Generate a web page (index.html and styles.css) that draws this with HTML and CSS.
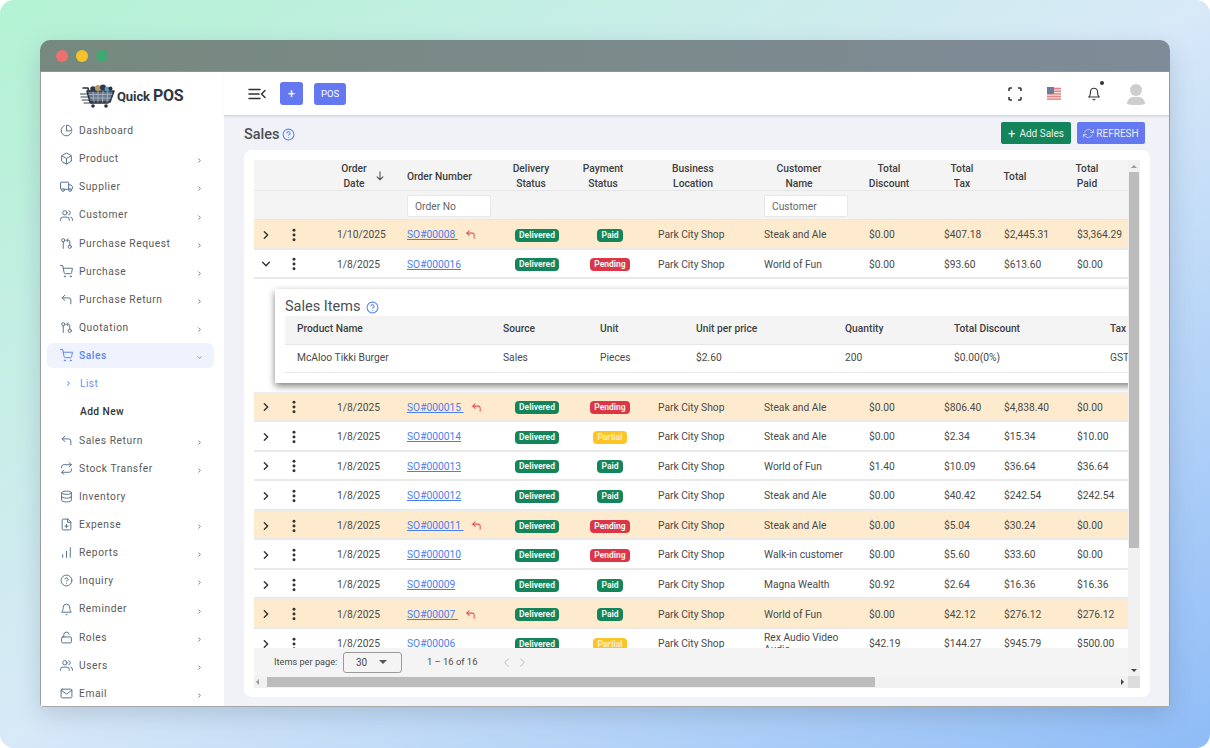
FILE: index.html
```html
<!DOCTYPE html>
<html lang="en">
<head>
    <meta charset="UTF-8">
    <title>Quick POS - Sales</title>
    <link rel="stylesheet" href="styles.css">
</head>
<body>
    <svg class="sprite" xmlns="http://www.w3.org/2000/svg">
        <symbol id="i-pie" viewBox="0 0 24 24"><path d="M21.21 15.89A10 10 0 1 1 8 2.83"/><path d="M22 12A10 10 0 0 0 12 2v10z"/></symbol>
        <symbol id="i-box" viewBox="0 0 24 24"><path d="M21 16V8a2 2 0 0 0-1-1.73l-7-4a2 2 0 0 0-2 0l-7 4A2 2 0 0 0 3 8v8a2 2 0 0 0 1 1.73l7 4a2 2 0 0 0 2 0l7-4A2 2 0 0 0 21 16z"/><polyline points="3.27 6.96 12 12.01 20.73 6.96"/><line x1="12" y1="22.08" x2="12" y2="12"/></symbol>
        <symbol id="i-truck" viewBox="0 0 24 24"><path d="M16 17V5a1 1 0 0 0-1-1H2a1 1 0 0 0-1 1v11a1 1 0 0 0 1 1h1"/><path d="M16 9h4l3 3.5V16a1 1 0 0 1-1 1h-1"/><circle cx="5.5" cy="18.5" r="2.5"/><circle cx="18.5" cy="18.5" r="2.5"/><line x1="8" y1="17" x2="16" y2="17"/></symbol>
        <symbol id="i-users" viewBox="0 0 24 24"><path d="M17 21v-2a4 4 0 0 0-4-4H5a4 4 0 0 0-4 4v2"/><circle cx="9" cy="7" r="4"/><path d="M23 21v-2a4 4 0 0 0-3-3.87"/><path d="M16 3.13a4 4 0 0 1 0 7.75"/></symbol>
        <symbol id="i-pull" viewBox="0 0 24 24"><circle cx="18" cy="18" r="3"/><circle cx="6" cy="6" r="3"/><path d="M13 6h3a2 2 0 0 1 2 2v7"/><polyline points="15 3 12 6 15 9"/><line x1="6" y1="9" x2="6" y2="21"/></symbol>
        <symbol id="i-cart" viewBox="0 0 24 24"><circle cx="9" cy="21" r="1"/><circle cx="20" cy="21" r="1"/><path d="M1 1h4l2.68 13.39a2 2 0 0 0 2 1.61h9.72a2 2 0 0 0 2-1.61L23 6H6"/></symbol>
        <symbol id="i-back" viewBox="0 0 24 24"><polyline points="9 14 4 9 9 4"/><path d="M20 20v-7a4 4 0 0 0-4-4H4"/></symbol>
        <symbol id="i-repeat" viewBox="0 0 24 24"><polyline points="17 1 21 5 17 9"/><path d="M3 11V9a4 4 0 0 1 4-4h14"/><polyline points="7 23 3 19 7 15"/><path d="M21 13v2a4 4 0 0 1-4 4H3"/></symbol>
        <symbol id="i-db" viewBox="0 0 24 24"><ellipse cx="12" cy="5" rx="9" ry="3"/><path d="M21 12c0 1.66-4 3-9 3s-9-1.34-9-3"/><path d="M3 5v14c0 1.66 4 3 9 3s9-1.34 9-3V5"/></symbol>
        <symbol id="i-file" viewBox="0 0 24 24"><path d="M14 2H6a2 2 0 0 0-2 2v16a2 2 0 0 0 2 2h12a2 2 0 0 0 2-2V8z"/><polyline points="14 2 14 8 20 8"/><line x1="12" y1="18" x2="12" y2="12"/><line x1="9" y1="15" x2="15" y2="15"/></symbol>
        <symbol id="i-bars" viewBox="0 0 24 24"><line x1="5" y1="21" x2="5" y2="16"/><line x1="12" y1="21" x2="12" y2="10"/><line x1="19" y1="21" x2="19" y2="3"/></symbol>
        <symbol id="i-help" viewBox="0 0 24 24"><circle cx="12" cy="12" r="10"/><path d="M9.09 9a3 3 0 0 1 5.83 1c0 2-3 3-3 3"/><line x1="12" y1="17" x2="12.01" y2="17"/></symbol>
        <symbol id="i-bell" viewBox="0 0 24 24"><path d="M18 8A6 6 0 0 0 6 8c0 7-3 9-3 9h18s-3-2-3-9"/><path d="M13.73 21a2 2 0 0 1-3.46 0"/></symbol>
        <symbol id="i-lock" viewBox="0 0 24 24"><rect x="3" y="11" width="18" height="11" rx="2"/><path d="M7 11V7a5 5 0 0 1 9.9-1"/></symbol>
        <symbol id="i-mail" viewBox="0 0 24 24"><path d="M4 4h16c1.1 0 2 .9 2 2v12c0 1.1-.9 2-2 2H4c-1.1 0-2-.9-2-2V6c0-1.1.9-2 2-2z"/><polyline points="22,6 12,13 2,6"/></symbol>
        <symbol id="i-right" viewBox="0 0 24 24"><polyline points="8 4 16 12 8 20"/></symbol>
        <symbol id="i-down" viewBox="0 0 24 24"><polyline points="4 8 12 16 20 8"/></symbol>
        <symbol id="i-left" viewBox="0 0 24 24"><polyline points="16 4 8 12 16 20"/></symbol>
        <symbol id="i-dots" viewBox="0 0 6 16"><circle cx="3" cy="2.5" r="1.7"/><circle cx="3" cy="8" r="1.7"/><circle cx="3" cy="13.5" r="1.7"/></symbol>
        <symbol id="i-sort" viewBox="0 0 12 12"><path d="M6 1v9.500M2.500 7 6 10.500 9.500 7"/></symbol>
    </svg>

    <div class="stage">
        <div class="window">
            <div class="titlebar">
                <span class="light light-red"></span>
                <span class="light light-yellow"></span>
                <span class="light light-green"></span>
            </div>
            <div class="app">
                <aside class="sidebar">
                    <div class="logo">
                        <svg class="logo-cart" viewBox="0 0 36 24" xmlns="http://www.w3.org/2000/svg">
                            <g stroke="#3b4450" stroke-width="1" fill="none">
                                <line x1="0" y1="10" x2="7" y2="10"/><line x1="1" y1="13" x2="9" y2="13"/><line x1="2" y1="16" x2="10" y2="16"/><line x1="4" y1="19" x2="12" y2="19"/>
                            </g>
                            <path d="M3 4h5l3 15h17" stroke="#2b323c" stroke-width="1.6" fill="none"/>
                            <path d="M7 7h27l-4 11H10z" fill="#69798c" stroke="#2b323c" stroke-width="1.6"/>
                            <g stroke="#b9c2cd" stroke-width=".7">
                                <line x1="9" y1="10.5" x2="32" y2="10.5"/><line x1="10" y1="14" x2="31" y2="14"/>
                                <line x1="13" y1="7" x2="14" y2="18"/><line x1="18" y1="7" x2="18" y2="18"/><line x1="23" y1="7" x2="22.5" y2="18"/><line x1="28" y1="7" x2="27" y2="18"/>
                            </g>
                            <circle cx="13" cy="5" r="2.8" fill="#2f3a48"/><circle cx="18" cy="4" r="3" fill="#b89a62"/><circle cx="23" cy="3.5" r="3" fill="#2f3a48"/><circle cx="27" cy="5" r="2.4" fill="#5aa0c8"/><circle cx="30.5" cy="4.500" r="2" fill="#2b323c"/>
                            <circle cx="13" cy="22" r="1.8" fill="#2b323c"/><circle cx="26" cy="22" r="1.8" fill="#2b323c"/>
                        </svg>
                        <span class="logo-quick">Quick</span>
                        <span class="logo-pos">POS</span>
                    </div>
                    <nav class="nav">
                        <a class="nav-item"><svg class="nav-icon"><use href="#i-pie"/></svg>Dashboard</a>
                        <a class="nav-item"><svg class="nav-icon"><use href="#i-box"/></svg>Product<svg class="nav-arrow"><use href="#i-right"/></svg></a>
                        <a class="nav-item"><svg class="nav-icon"><use href="#i-truck"/></svg>Supplier<svg class="nav-arrow"><use href="#i-right"/></svg></a>
                        <a class="nav-item"><svg class="nav-icon"><use href="#i-users"/></svg>Customer<svg class="nav-arrow"><use href="#i-right"/></svg></a>
                        <a class="nav-item"><svg class="nav-icon"><use href="#i-pull"/></svg>Purchase Request<svg class="nav-arrow"><use href="#i-right"/></svg></a>
                        <a class="nav-item"><svg class="nav-icon"><use href="#i-cart"/></svg>Purchase<svg class="nav-arrow"><use href="#i-right"/></svg></a>
                        <a class="nav-item"><svg class="nav-icon"><use href="#i-back"/></svg>Purchase Return<svg class="nav-arrow"><use href="#i-right"/></svg></a>
                        <a class="nav-item"><svg class="nav-icon"><use href="#i-pull"/></svg>Quotation<svg class="nav-arrow"><use href="#i-right"/></svg></a>
                        <a class="nav-item nav-active"><svg class="nav-icon"><use href="#i-cart"/></svg>Sales<svg class="nav-arrow"><use href="#i-down"/></svg></a>
                        <a class="nav-sub nav-sub-active"><svg class="sub-arrow"><use href="#i-right"/></svg>List</a>
                        <a class="nav-sub">Add New</a>
                        <a class="nav-item"><svg class="nav-icon"><use href="#i-back"/></svg>Sales Return<svg class="nav-arrow"><use href="#i-right"/></svg></a>
                        <a class="nav-item"><svg class="nav-icon"><use href="#i-repeat"/></svg>Stock Transfer<svg class="nav-arrow"><use href="#i-right"/></svg></a>
                        <a class="nav-item"><svg class="nav-icon"><use href="#i-db"/></svg>Inventory</a>
                        <a class="nav-item"><svg class="nav-icon"><use href="#i-file"/></svg>Expense<svg class="nav-arrow"><use href="#i-right"/></svg></a>
                        <a class="nav-item"><svg class="nav-icon"><use href="#i-bars"/></svg>Reports<svg class="nav-arrow"><use href="#i-right"/></svg></a>
                        <a class="nav-item"><svg class="nav-icon"><use href="#i-help"/></svg>Inquiry<svg class="nav-arrow"><use href="#i-right"/></svg></a>
                        <a class="nav-item"><svg class="nav-icon"><use href="#i-bell"/></svg>Reminder<svg class="nav-arrow"><use href="#i-right"/></svg></a>
                        <a class="nav-item"><svg class="nav-icon"><use href="#i-lock"/></svg>Roles<svg class="nav-arrow"><use href="#i-right"/></svg></a>
                        <a class="nav-item"><svg class="nav-icon"><use href="#i-users"/></svg>Users<svg class="nav-arrow"><use href="#i-right"/></svg></a>
                        <a class="nav-item"><svg class="nav-icon"><use href="#i-mail"/></svg>Email<svg class="nav-arrow"><use href="#i-right"/></svg></a>
                    </nav>
                </aside>

                <div class="content">
                    <header class="topbar">
                        <svg class="menu-icon" viewBox="0 0 18 12" xmlns="http://www.w3.org/2000/svg"><path d="M1 1.5h11M1 6h10M1 10.5h11M17 2.5 13.5 6l3.5 3.5"/></svg>
                        <button class="top-btn top-btn-plus">+</button>
                        <button class="top-btn top-btn-pos">POS</button>
                        <div class="top-right">
                            <svg class="full-icon" viewBox="0 0 14 14" xmlns="http://www.w3.org/2000/svg"><path d="M1 4V2a1 1 0 0 1 1-1h2M10 1h2a1 1 0 0 1 1 1v2M13 10v2a1 1 0 0 1-1 1h-2M4 13H2a1 1 0 0 1-1-1v-2"/></svg>
                            <svg class="flag" viewBox="0 0 14 13" xmlns="http://www.w3.org/2000/svg">
                                <rect width="14" height="13" fill="#f1d6d4"/>
                                <g fill="#d96a66"><rect y="1" width="14" height="1.4"/><rect y="3.6" width="14" height="1.4"/><rect y="6.2" width="14" height="1.4"/><rect y="8.8" width="14" height="1.4"/><rect y="11.4" width="14" height="1.4"/></g>
                                <rect width="7" height="7" fill="#4a5a80"/>
                            </svg>
                            <span class="bell-wrap"><svg class="bell"><use href="#i-bell"/></svg><span class="bell-dot"></span></span>
                            <svg class="avatar" viewBox="0 0 20 22" xmlns="http://www.w3.org/2000/svg"><circle cx="10" cy="7" r="6" fill="#cdcdcd"/><path d="M1 21c0-4 3-7 6-7h6c3 0 6 3 6 7-3 1.500-15 1.500-18 0z" fill="#cdcdcd"/></svg>
                        </div>
                    </header>

                    <main class="main">
                        <div class="page-head">
                            <h1 class="page-title">Sales</h1>
                            <svg class="help help-page"><use href="#i-help"/></svg>
                            <div class="page-actions">
                                <button class="btn btn-green"><span class="btn-plus">+</span>Add Sales</button>
                                <button class="btn btn-blue"><svg class="btn-icon" viewBox="0 0 24 24" xmlns="http://www.w3.org/2000/svg"><polyline points="23 4 23 10 17 10"/><polyline points="1 20 1 14 7 14"/><path d="M3.51 9a9 9 0 0 1 14.85-3.36L23 10M1 14l4.640 4.360A9 9 0 0 0 20.490 15"/></svg>REFRESH</button>
                            </div>
                        </div>

                        <section class="card">
                            <div class="grid-box">
                                <div class="grid-main">
                                    <div class="grid-view">
                                        <div class="cols head">
                                            <div></div><div></div>
                                            <div class="th th-date"><span class="th-date-text">Order<br>Date</span><svg class="sort"><use href="#i-sort"/></svg></div>
                                            <div class="th th-left">Order Number</div>
                                            <div class="th">Delivery<br>Status</div>
                                            <div class="th th-pay">Payment<br>Status</div>
                                            <div class="th th-loc">Business<br>Location</div>
                                            <div class="th th-cust">Customer<br>Name</div>
                                            <div class="th th-disc">Total<br>Discount</div>
                                            <div class="th th-tax">Total<br>Tax</div>
                                            <div class="th th-total">Total</div>
                                            <div class="th th-paid">Total<br>Paid</div>
                                        </div>
                                        <div class="cols filters">
                                            <div class="span-four"></div>
                                            <div class="filter-cell"><span class="filter">Order No</span></div>
                                            <div></div><div></div><div></div>
                                            <div class="filter-cell"><span class="filter">Customer</span></div>
                                        </div>

                                        <div class="cols row row-return">
                                            <svg class="chev"><use href="#i-right"/></svg><svg class="dots"><use href="#i-dots"/></svg>
                                            <div class="td-date">1/10/2025</div>
                                            <div class="td"><a class="so">SO#00008&nbsp;</a><svg class="ret"><use href="#i-back"/></svg></div>
                                            <div class="td-badge"><span class="badge b-green">Delivered</span></div>
                                            <div class="td-badge"><span class="badge b-green">Paid</span></div>
                                            <div class="td">Park City Shop</div><div class="td">Steak and Ale</div>
                                            <div class="td">$0.00</div><div class="td">$407.18</div><div class="td">$2,445.31</div><div class="td">$3,364.29</div>
                                        </div>
                                        <div class="cols row">
                                            <svg class="chev"><use href="#i-down"/></svg><svg class="dots"><use href="#i-dots"/></svg>
                                            <div class="td-date">1/8/2025</div>
                                            <div class="td"><a class="so">SO#000016</a></div>
                                            <div class="td-badge"><span class="badge b-green">Delivered</span></div>
                                            <div class="td-badge"><span class="badge b-red">Pending</span></div>
                                            <div class="td">Park City Shop</div><div class="td">World of Fun</div>
                                            <div class="td">$0.00</div><div class="td">$93.60</div><div class="td">$613.60</div><div class="td">$0.00</div>
                                        </div>

                                        <div class="detail">
                                            <div class="detail-card">
                                                <div class="detail-title">Sales Items <svg class="help"><use href="#i-help"/></svg></div>
                                                <div class="dcols dhead">
                                                    <div>Product Name</div><div>Source</div><div>Unit</div><div>Unit per price</div><div>Quantity</div><div>Total Discount</div><div>Tax</div>
                                                </div>
                                                <div class="dcols drow">
                                                    <div>McAloo Tikki Burger</div><div>Sales</div><div>Pieces</div><div>$2.60</div><div>200</div><div>$0.00(0%)</div><div>GST</div>
                                                </div>
                                            </div>
                                        </div>

                                        <div class="cols row row-return">
                                            <svg class="chev"><use href="#i-right"/></svg><svg class="dots"><use href="#i-dots"/></svg>
                                            <div class="td-date">1/8/2025</div>
                                            <div class="td"><a class="so">SO#000015&nbsp;</a><svg class="ret"><use href="#i-back"/></svg></div>
                                            <div class="td-badge"><span class="badge b-green">Delivered</span></div>
                                            <div class="td-badge"><span class="badge b-red">Pending</span></div>
                                            <div class="td">Park City Shop</div><div class="td">Steak and Ale</div>
                                            <div class="td">$0.00</div><div class="td">$806.40</div><div class="td">$4,838.40</div><div class="td">$0.00</div>
                                        </div>
                                        <div class="cols row">
                                            <svg class="chev"><use href="#i-right"/></svg><svg class="dots"><use href="#i-dots"/></svg>
                                            <div class="td-date">1/8/2025</div>
                                            <div class="td"><a class="so">SO#000014</a></div>
                                            <div class="td-badge"><span class="badge b-green">Delivered</span></div>
                                            <div class="td-badge"><span class="badge b-yellow">Partial</span></div>
                                            <div class="td">Park City Shop</div><div class="td">Steak and Ale</div>
                                            <div class="td">$0.00</div><div class="td">$2.34</div><div class="td">$15.34</div><div class="td">$10.00</div>
                                        </div>
                                        <div class="cols row">
                                            <svg class="chev"><use href="#i-right"/></svg><svg class="dots"><use href="#i-dots"/></svg>
                                            <div class="td-date">1/8/2025</div>
                                            <div class="td"><a class="so">SO#000013</a></div>
                                            <div class="td-badge"><span class="badge b-green">Delivered</span></div>
                                            <div class="td-badge"><span class="badge b-green">Paid</span></div>
                                            <div class="td">Park City Shop</div><div class="td">World of Fun</div>
                                            <div class="td">$1.40</div><div class="td">$10.09</div><div class="td">$36.64</div><div class="td">$36.64</div>
                                        </div>
                                        <div class="cols row">
                                            <svg class="chev"><use href="#i-right"/></svg><svg class="dots"><use href="#i-dots"/></svg>
                                            <div class="td-date">1/8/2025</div>
                                            <div class="td"><a class="so">SO#000012</a></div>
                                            <div class="td-badge"><span class="badge b-green">Delivered</span></div>
                                            <div class="td-badge"><span class="badge b-green">Paid</span></div>
                                            <div class="td">Park City Shop</div><div class="td">Steak and Ale</div>
                                            <div class="td">$0.00</div><div class="td">$40.42</div><div class="td">$242.54</div><div class="td">$242.54</div>
                                        </div>
                                        <div class="cols row row-return">
                                            <svg class="chev"><use href="#i-right"/></svg><svg class="dots"><use href="#i-dots"/></svg>
                                            <div class="td-date">1/8/2025</div>
                                            <div class="td"><a class="so">SO#000011&nbsp;</a><svg class="ret"><use href="#i-back"/></svg></div>
                                            <div class="td-badge"><span class="badge b-green">Delivered</span></div>
                                            <div class="td-badge"><span class="badge b-red">Pending</span></div>
                                            <div class="td">Park City Shop</div><div class="td">Steak and Ale</div>
                                            <div class="td">$0.00</div><div class="td">$5.04</div><div class="td">$30.24</div><div class="td">$0.00</div>
                                        </div>
                                        <div class="cols row">
                                            <svg class="chev"><use href="#i-right"/></svg><svg class="dots"><use href="#i-dots"/></svg>
                                            <div class="td-date">1/8/2025</div>
                                            <div class="td"><a class="so">SO#000010</a></div>
                                            <div class="td-badge"><span class="badge b-green">Delivered</span></div>
                                            <div class="td-badge"><span class="badge b-red">Pending</span></div>
                                            <div class="td">Park City Shop</div><div class="td">Walk-in customer</div>
                                            <div class="td">$0.00</div><div class="td">$5.60</div><div class="td">$33.60</div><div class="td">$0.00</div>
                                        </div>
                                        <div class="cols row">
                                            <svg class="chev"><use href="#i-right"/></svg><svg class="dots"><use href="#i-dots"/></svg>
                                            <div class="td-date">1/8/2025</div>
                                            <div class="td"><a class="so">SO#00009</a></div>
                                            <div class="td-badge"><span class="badge b-green">Delivered</span></div>
                                            <div class="td-badge"><span class="badge b-green">Paid</span></div>
                                            <div class="td">Park City Shop</div><div class="td">Magna Wealth</div>
                                            <div class="td">$0.92</div><div class="td">$2.64</div><div class="td">$16.36</div><div class="td">$16.36</div>
                                        </div>
                                        <div class="cols row row-return">
                                            <svg class="chev"><use href="#i-right"/></svg><svg class="dots"><use href="#i-dots"/></svg>
                                            <div class="td-date">1/8/2025</div>
                                            <div class="td"><a class="so">SO#00007&nbsp;</a><svg class="ret"><use href="#i-back"/></svg></div>
                                            <div class="td-badge"><span class="badge b-green">Delivered</span></div>
                                            <div class="td-badge"><span class="badge b-green">Paid</span></div>
                                            <div class="td">Park City Shop</div><div class="td">World of Fun</div>
                                            <div class="td">$0.00</div><div class="td">$42.12</div><div class="td">$276.12</div><div class="td">$276.12</div>
                                        </div>
                                        <div class="cols row">
                                            <svg class="chev"><use href="#i-right"/></svg><svg class="dots"><use href="#i-dots"/></svg>
                                            <div class="td-date">1/8/2025</div>
                                            <div class="td"><a class="so">SO#00006</a></div>
                                            <div class="td-badge"><span class="badge b-green">Delivered</span></div>
                                            <div class="td-badge"><span class="badge b-yellow">Partial</span></div>
                                            <div class="td">Park City Shop</div><div class="td td-wrap">Rex Audio Video Audio</div>
                                            <div class="td">$42.19</div><div class="td">$144.27</div><div class="td">$945.79</div><div class="td">$500.00</div>
                                        </div>
                                    </div>
                                    <div class="pager">
                                        <span class="pager-label">Items per page:</span>
                                        <span class="pager-select">30<span class="caret"></span></span>
                                        <span class="pager-range">1 – 16 of 16</span>
                                        <svg class="pager-nav"><use href="#i-left"/></svg>
                                        <svg class="pager-nav"><use href="#i-right"/></svg>
                                    </div>
                                </div>
                                <div class="vbar">
                                    <span class="tri tri-up"></span>
                                    <span class="vthumb"></span>
                                    <span class="tri tri-down"></span>
                                </div>
                                <div class="hbar">
                                    <span class="tri tri-left"></span>
                                    <span class="hthumb"></span>
                                    <span class="tri tri-right"></span>
                                </div>
                                <div class="corner"></div>
                            </div>
                        </section>
                    </main>
                </div>
            </div>
        </div>
    </div>
</body>
</html>
```

FILE: styles.css
```css
* {
    margin: 0;
    padding: 0;
    box-sizing: border-box;
}
html, body {
    background: #fff;
    overflow: hidden;
}
body {
    width: 1210px;
    height: 748px;
    font: 10.25px/1.3 Roboto, "Liberation Sans", sans-serif;
    color: #4a4a4a;
}
.sprite {
    display: none;
}
svg {
    fill: none;
    stroke: currentColor;
    stroke-width: 2;
    stroke-linecap: round;
    stroke-linejoin: round;
    flex: none;
}
button {
    border: 0;
    font-family: inherit;
}
.stage {
    height: 748px;
    padding: 40px 40px 41px;
    border-radius: 14px;
    background: linear-gradient(to bottom right, #b3f3d3 0%, #d8e9f8 50%, #8fbcf7 100%);
}
.window {
    height: 667px;
    display: flex;
    flex-direction: column;
    border-radius: 10px 10px 4px 4px;
    box-shadow: 0 8px 24px rgba(60, 80, 110, .22);
    overflow: hidden;
}

/* title bar */
.titlebar {
    height: 32px;
    flex: none;
    display: flex;
    align-items: center;
    gap: 8px;
    padding-left: 16px;
    background: linear-gradient(90deg, #76897e, #7f8b98);
    border-bottom: 1px solid #8d9499;
}
.light {
    width: 12px;
    height: 12px;
    border-radius: 50%;
}
.light-red { background: #ee6f70; }
.light-yellow { background: #f5c329; }
.light-green { background: #3fa76f; }

.app {
    flex: 1;
    min-height: 0;
    display: flex;
    border-left: 1px solid #9c9c9c;
    border-right: 1px solid #9c9c9c;
    border-bottom: 1px solid #a8a8a8;
}

/* sidebar */
.sidebar {
    width: 183px;
    flex: none;
    background: #fff;
    overflow: hidden;
}
.logo {
    height: 44px;
    display: flex;
    align-items: center;
    padding: 3px 0 0 39px;
    color: #2f3640;
    font-weight: 700;
}
.logo-cart {
    width: 36px;
    height: 24px;
    stroke: none;
    margin-right: 1px;
}
.logo-quick {
    font-size: 13px;
    margin-right: 3px;
    margin-top: 3px;
    letter-spacing: -.1px;
}
.logo-pos {
    font-size: 16px;
    margin-top: 1px;
    letter-spacing: -.2px;
}
.nav {
    display: flex;
    flex-direction: column;
    padding-top: .6px;
}
.nav-item {
    height: 25px;
    flex: none;
    margin: 1.58px 10px 1.57px 6px;
    padding: 0 13px;
    display: flex;
    align-items: center;
    border-radius: 6px;
    letter-spacing: .55px;
    color: #5a5a5a;
}
.nav-icon {
    width: 13px;
    height: 13px;
    margin-right: 6px;
    color: #56708f;
    stroke-width: 1.8;
}
.nav-arrow {
    width: 5px;
    height: 5px;
    margin-left: auto;
    margin-right: -1px;
    margin-top: 4px;
    color: #666;
    stroke-width: 4;
}
.nav-active {
    background: #eef3fd;
    color: #5b86ee;
    font-weight: 500;
}
.nav-active .nav-icon,
.nav-active .nav-arrow {
    color: #5b86ee;
}
.nav-sub {
    height: 28.15px;
    flex: none;
    padding-left: 39px;
    display: flex;
    align-items: center;
    letter-spacing: .4px;
    font-weight: 500;
    color: #333;
}
.nav-sub-active {
    color: #6a93f2;
    font-weight: 400;
}
.sub-arrow {
    width: 5px;
    height: 5px;
    margin: 0 9px 0 -14px;
    stroke-width: 5;
}

/* top bar */
.content {
    flex: 1;
    min-width: 0;
    display: flex;
    flex-direction: column;
    background: #f0f2f8;
}
.topbar {
    height: 44px;
    flex: none;
    display: flex;
    align-items: center;
    padding: 0 24px;
    background: #fff;
    border-bottom: 1px solid #d8d8d8;
    box-shadow: 0 1px 2px rgba(0, 0, 0, .08);
}
.menu-icon {
    width: 18px;
    height: 12px;
    color: #333;
    stroke-width: 1.5;
    margin-right: 14px;
}
.top-btn {
    height: 22px;
    color: #fff;
    background: #6478f0;
    border-radius: 3px;
    font-size: 9.5px;
}
.top-btn-plus {
    width: 23px;
    height: 23px;
    font-size: 13px;
    margin-right: 11px;
}
.top-btn-pos {
    width: 32px;
}
.top-right {
    margin-left: auto;
    display: flex;
    align-items: center;
    margin-right: -1px;
}
.full-icon {
    width: 14px;
    height: 14px;
    color: #333;
    stroke-width: 1.6;
    stroke-linecap: butt;
}
.flag {
    width: 14px;
    height: 13px;
    stroke: none;
    margin-left: 25px;
    opacity: .8;
}
.bell-wrap {
    position: relative;
    display: flex;
    margin-left: 26px;
}
.bell {
    width: 14px;
    height: 14px;
    color: #333;
    stroke-width: 1.8;
}
.bell-dot {
    position: absolute;
    top: -6px;
    right: -3px;
    width: 4px;
    height: 4px;
    border-radius: 50%;
    background: #333;
}
.avatar {
    width: 20px;
    height: 22px;
    stroke: none;
    margin-left: 25px;
}

/* page */
.main {
    flex: 1;
    min-height: 0;
    display: flex;
    flex-direction: column;
    padding: 6px 19px 9px 20px;
}
.page-head {
    height: 22px;
    flex: none;
    display: flex;
    align-items: center;
    padding-right: 5px;
    margin-bottom: 6px;
}
.page-title {
    font-size: 14.5px;
    font-weight: 500;
    color: #4a4f57;
    margin-right: 2px;
    padding-top: 5px;
}
.help {
    width: 13px;
    height: 13px;
    color: #5b86ee;
    stroke-width: 2;
}
.help-page {
    margin-top: 3px;
}
.page-actions {
    margin-left: auto;
    display: flex;
    gap: 6px;
}
.btn {
    height: 22px;
    display: flex;
    align-items: center;
    justify-content: center;
    color: #e8f1ee;
    font-size: 10px;
    border-radius: 2px;
}
.btn-green {
    width: 70px;
    background: #14855a;
}
.btn-blue {
    width: 68px;
    background: #6478f0;
}
.btn-plus {
    font-size: 13px;
    margin-right: 4px;
    line-height: 1;
}
.btn-icon {
    width: 11px;
    height: 11px;
    margin-right: 2px;
    stroke-width: 1.6;
}
.card {
    flex: 1;
    min-height: 0;
    padding: 10px;
    background: #fff;
    border-radius: 8px;
}

/* data grid */
.grid-box {
    height: 100%;
    display: grid;
    grid-template-columns: 874px 12px;
    grid-template-rows: 516px 12px;
}
.grid-main {
    display: flex;
    flex-direction: column;
    min-height: 0;
}
.grid-view {
    height: 488px;
    overflow: hidden;
    background: #fff;
}
.cols {
    display: grid;
    grid-template-columns: 26px 28px 92px 100px 62px 89px 106px 105px 75px 60px 73px 58px;
    align-items: center;
}
.head {
    height: 31px;
    padding-top: 1px;
    background: #f4f4f4;
    border-bottom: 1px solid #e6e6e6;
}
.th {
    font-weight: 500;
    font-size: 10.25px;
    line-height: 15px;
    color: #3f3f3f;
    text-align: center;
}
.th-left { text-align: left; padding-left: 7px; }
.th-pay { padding-right: 7px; }
.th-loc { padding-right: 22px; }
.th-cust { padding-right: 21px; }
.th-disc { padding-right: 21px; }
.th-tax { padding-right: 10px; }
.th-total { padding-right: 37px; }
.th-paid { padding-right: 24px; }
.th-date {
    display: grid;
    grid-template-columns: 1fr auto 1fr;
    align-items: center;
}
.th-date-text {
    grid-column: 2;
}
.sort {
    grid-column: 3;
    width: 10px;
    height: 10px;
    margin-left: 8px;
    color: #555;
    stroke-width: 1.3;
}
.filters {
    height: 29px;
    padding-top: 1px;
    background: #f4f4f4;
    border-bottom: 1px solid #e6e6e6;
}
.span-four {
    grid-column: span 3;
}
.filter-cell {
    padding-left: 7px;
}
.filter {
    display: block;
    width: 84px;
    height: 22px;
    line-height: 20px;
    padding-left: 7px;
    padding-top: 1px;
    color: #666;
    background: #fff;
    border: 1px solid #e8e8e8;
    border-radius: 2px;
}
.row {
    height: 29.55px;
    padding-top: 2px;
    background: #fff;
    border-bottom: 2px solid #e9e9e9;
}
.row-return {
    background: #feeacd;
}
.chev {
    width: 10px;
    height: 10px;
    justify-self: center;
    color: #333;
    stroke-width: 3.4;
    margin-right: 2px;
}
.dots {
    width: 6px;
    height: 14px;
    justify-self: center;
    fill: #333;
    stroke: none;
}
.td-date {
    padding-left: 29px;
}
.td {
    display: flex;
    align-items: center;
    padding-left: 7px;
    white-space: nowrap;
}
.td-wrap {
    white-space: normal;
    line-height: 12px;
}
.td-badge {
    text-align: center;
    padding-left: 12px;
}
.td-badge + .td-badge {
    padding-left: 7px;
}
.so {
    color: #4a80ee;
    text-decoration: underline;
    white-space: pre;
}
.ret {
    width: 11px;
    height: 11px;
    margin-left: 7px;
    color: #e0525f;
    stroke-width: 2.2;
}
.badge {
    display: inline-block;
    padding: 0 4px;
    height: 13px;
    line-height: 12px;
    border-radius: 4px;
    font-size: 8.5px;
    font-weight: 700;
    color: #eef6f0;
}
.b-green { background: #14855a; }
.b-red { background: #dc3545; }
.b-yellow { background: #fdc426; color: #fbeec2; }

/* expanded row */
.detail {
    height: 113.5px;
    padding: 10px 0 0 21px;
    background: #fff;
    overflow: hidden;
    border-bottom: 1px solid #ececec;
}
.detail-card {
    width: 900px;
    height: 94px;
    padding: 0 10px;
    background: #fff;
    box-shadow: 0 3px 7px rgba(0, 0, 0, .5);
}
.detail-title {
    height: 27px;
    padding-top: 9px;
    display: flex;
    align-items: center;
    gap: 6px;
    font-size: 14.5px;
    color: #4a4f57;
}
.dcols {
    display: grid;
    grid-template-columns: 206px 97px 96px 149px 109px 156px 60px;
    align-items: center;
}
.dcols div {
    padding-left: 12px;
    padding-bottom: 2px;
    white-space: nowrap;
}
.dhead {
    height: 29px;
    background: #f4f4f4;
    font-weight: 500;
    color: #3f3f3f;
    border-bottom: 1px solid #e6e6e6;
}
.drow {
    height: 28px;
    border-bottom: 1px solid #e9e9e9;
}

/* pager and scrollbars */
.pager {
    height: 28px;
    flex: none;
    display: flex;
    align-items: center;
    padding-left: 20px;
    background: #f4f4f4;
    font-size: 9.2px;
    color: #4a4a4a;
}
.pager-label {
    width: 69px;
}
.pager-select {
    width: 59px;
    height: 21px;
    display: flex;
    align-items: center;
    justify-content: space-between;
    padding: 0 14px 0 12px;
    border: 1px solid #9a9a9a;
    border-radius: 3px;
    font-size: 10px;
}
.caret {
    border-left: 4px solid transparent;
    border-right: 4px solid transparent;
    border-top: 4px solid #555;
}
.pager-range {
    width: 74px;
    margin-left: 25px;
    font-size: 9.4px;
}
.pager-nav {
    width: 11px;
    height: 11px;
    color: #c8c8c8;
    margin-right: 5px;
    stroke-width: 2.2;
}
.vbar {
    display: flex;
    flex-direction: column;
    align-items: center;
    background: #f1f1f1;
}
.vthumb {
    width: 10px;
    height: 376px;
    margin-top: 4px;
    background: #bcbcbc;
}
.tri {
    width: 0;
    height: 0;
    flex: none;
    border: 3px solid transparent;
}
.tri-up {
    border-top: 0;
    border-bottom: 3px solid #999;
    margin-top: 5px;
}
.tri-down {
    border-bottom: 0;
    border-top: 3px solid #444;
    margin-top: auto;
    margin-bottom: 4px;
}
.hbar {
    display: flex;
    align-items: center;
    background: #f1f1f1;
}
.hthumb {
    width: 608px;
    height: 10px;
    margin-left: 8px;
    background: #bcbcbc;
}
.tri-left {
    border-left: 0;
    border-right: 3px solid #999;
    margin-left: 2px;
}
.tri-right {
    border-right: 0;
    border-left: 3px solid #444;
    margin-left: auto;
    margin-right: 4px;
}
.corner {
    background: #dcdcdc;
}
```
